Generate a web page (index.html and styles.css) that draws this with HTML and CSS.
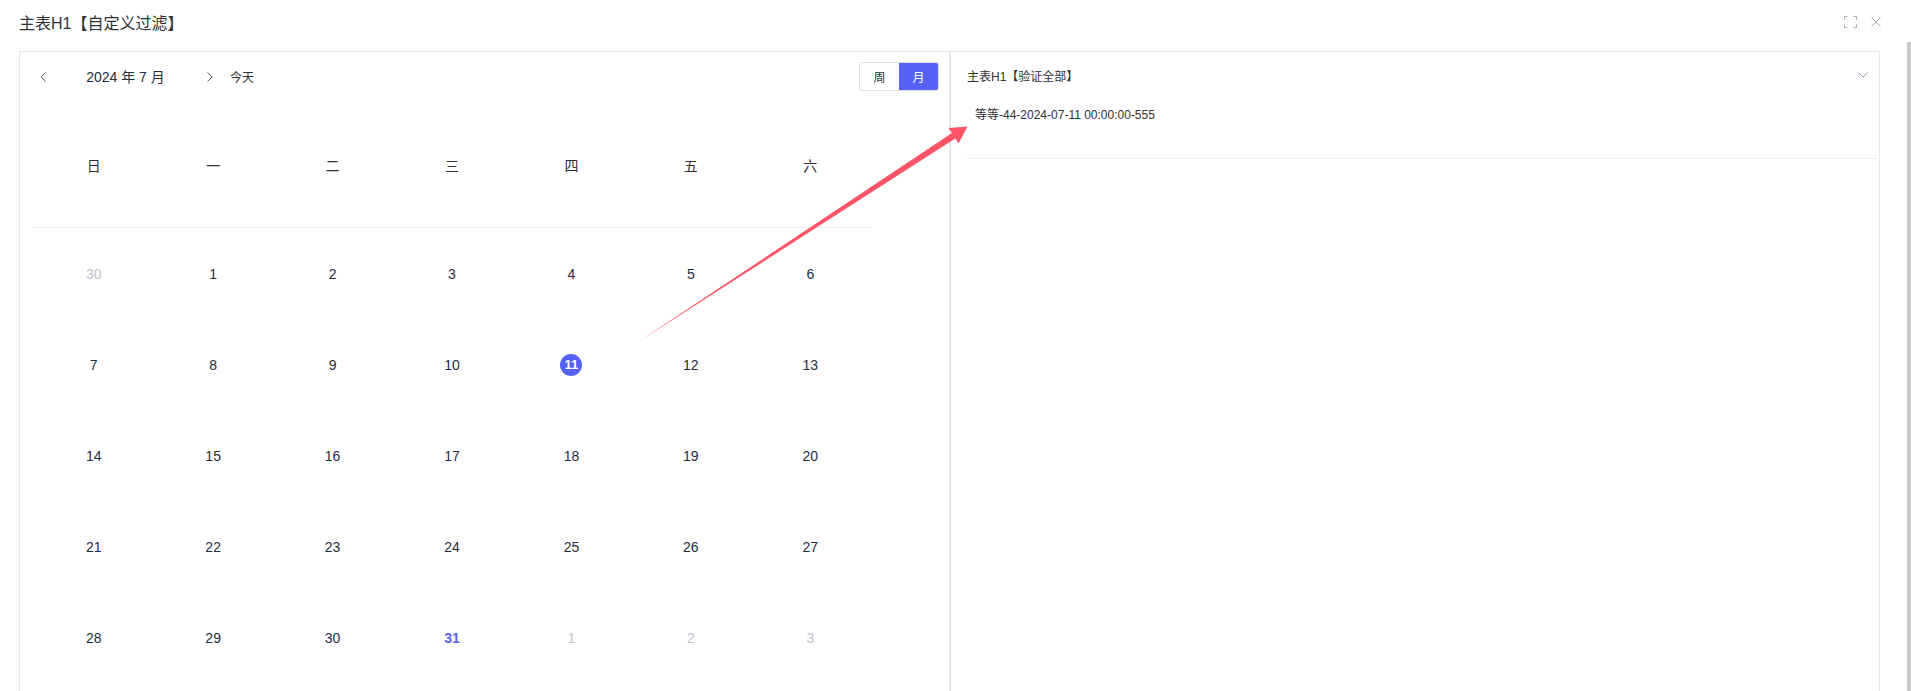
FILE: index.html
```html
<!doctype html>
<html>
<head>
    <meta charset="UTF-8">
    <title>主表H1【自定义过滤】</title>
    <link rel="stylesheet" href="styles.css">
</head>
<body>
<div class="dialog">
    <div class="dialog-header">
        <span class="dialog-title">主表H1【自定义过滤】</span>
        <div class="dialog-tools">
            <svg class="tool-icon" width="13" height="12" viewBox="0 0 13 12"><path d="M0.5 3.5V0.5H3.5M9.5 0.5H12.5V3.5M12.5 8.5V11.5H9.5M3.5 11.5H0.5V8.5" fill="none" stroke="#a8abb2" stroke-width="1"/></svg>
            <svg class="tool-icon" width="10" height="10" viewBox="0 0 10 10"><path d="M0.5 0.5L9.5 9.5M9.5 0.5L0.5 9.5" fill="none" stroke="#a8abb2" stroke-width="1"/></svg>
        </div>
    </div>

    <div class="dialog-body">
        <div class="board">
            <!-- 日历 -->
            <div class="cal">
                <div class="cal-toolbar">
                    <span class="nav-btn nav-prev"><svg width="6" height="10" viewBox="0 0 6 10"><path d="M5.5 0.5L1 5L5.5 9.5" fill="none" stroke="#606266" stroke-width="1"/></svg></span>
                    <span class="cal-title">2024 年 7 月</span>
                    <span class="nav-btn nav-next"><svg width="6" height="10" viewBox="0 0 6 10"><path d="M0.5 0.5L5 5L0.5 9.5" fill="none" stroke="#606266" stroke-width="1"/></svg></span>
                    <span class="today">今天</span>
                    <div class="view-switch">
                        <span class="view-btn">周</span>
                        <span class="view-btn active">月</span>
                    </div>
                </div>

                <div class="cal-grid">
                    <div class="week-head">
                        <span>日</span><span>一</span><span>二</span><span>三</span><span>四</span><span>五</span><span>六</span>
                    </div>
                    <div class="week">
                        <span class="day other">30</span><span class="day">1</span><span class="day">2</span><span class="day">3</span><span class="day">4</span><span class="day">5</span><span class="day">6</span>
                    </div>
                    <div class="week">
                        <span class="day">7</span><span class="day">8</span><span class="day">9</span><span class="day">10</span><span class="day"><b class="selected">11</b></span><span class="day">12</span><span class="day">13</span>
                    </div>
                    <div class="week">
                        <span class="day">14</span><span class="day">15</span><span class="day">16</span><span class="day">17</span><span class="day">18</span><span class="day">19</span><span class="day">20</span>
                    </div>
                    <div class="week">
                        <span class="day">21</span><span class="day">22</span><span class="day">23</span><span class="day">24</span><span class="day">25</span><span class="day">26</span><span class="day">27</span>
                    </div>
                    <div class="week">
                        <span class="day">28</span><span class="day">29</span><span class="day">30</span><span class="day today-day">31</span><span class="day other">1</span><span class="day other">2</span><span class="day other">3</span>
                    </div>
                </div>
            </div>

            <!-- 右侧列表 -->
            <div class="side">
                <div class="side-header">
                    <span class="side-title">主表H1【验证全部】</span>
                    <svg class="collapse-icon" width="10" height="6" viewBox="0 0 10 6"><path d="M0.5 0.5L5 5L9.5 0.5" fill="none" stroke="#8c95b4" stroke-width="1"/></svg>
                </div>
                <div class="events">
                    <div class="event">等等-44-2024-07-11 00:00:00-555</div>
                </div>
            </div>
        </div>
        <div class="scroll-thumb"></div>
    </div>
</div>

<svg class="mark-arrow" width="1911" height="691" viewBox="0 0 1911 691">
    <polygon points="638,342 952,133 948.5,128 967.5,126.5 958.5,143.5 955.3,138.5" fill="#fd5468"/>
</svg>
</body>
</html>
```

FILE: styles.css
```css
* { margin: 0; padding: 0; box-sizing: border-box; }
html, body { height: 100%; overflow: hidden; }
body {
    background: #fff;
    font-family: "Liberation Sans", "Noto Sans CJK SC", sans-serif;
    color: #303133;
    position: relative;
}

.dialog { height: 100%; display: flex; flex-direction: column; }
.dialog-header {
    height: 42px;
    padding: 2px 30px 0 19px;
    display: flex;
    align-items: center;
    justify-content: space-between;
}
.dialog-title { font-size: 16px; color: #303133; }
.dialog-tools { display: flex; align-items: center; gap: 14px; }
.tool-icon { display: block; }

.dialog-body { flex: 1; display: flex; min-height: 0; }
.board {
    flex: 1;
    margin: 9px 27px 0 19px;
    border: 1px solid #e4e7ed;
    border-bottom: 0;
    display: flex;
}
.scroll-thumb { width: 4px; background: #c8c8c8; }

/* calendar */
.cal { width: 931px; border-right: 2px solid #e4e7ed; }
.cal-toolbar {
    display: flex;
    align-items: center;
    height: 29px;
    margin: 10px 10px 0 13px;
    font-size: 14px;
}
.nav-btn { display: flex; align-items: center; justify-content: center; height: 29px; }
.nav-prev { width: 20px; }
.nav-next { width: 24px; }
.cal-title { width: 145px; text-align: center; color: #1f2d3d; margin-top: -1px; }
.today { margin-left: 8px; font-size: 12px; color: #303133; margin-top: -1px; }
.view-switch {
    margin-left: auto;
    display: flex;
    height: 29px;
    border: 1px solid #dcdfe6;
    border-radius: 3px;
    overflow: hidden;
}
.view-btn {
    width: 39px;
    display: flex;
    align-items: center;
    justify-content: center;
    font-size: 12px;
    color: #303133;
    background: #fff;
}
.view-btn.active { background: #5662f6; color: #fff; }

.cal-grid { width: 836px; margin: 15px 0 0 14px; padding-bottom: 20px; }
.week-head {
    display: grid;
    grid-template-columns: repeat(7, 1fr);
    height: 122px;
    padding-bottom: 4px;
    align-items: center;
    border-bottom: 1px solid #ebeef5;
    font-size: 14px;
    color: #303133;
    text-align: center;
}
.week {
    display: grid;
    grid-template-columns: repeat(7, 1fr);
    height: 91px;
    align-items: center;
    text-align: center;
}
.day { font-size: 14px; color: #1f2d3d; }
.day.other { color: #c0c4cc; }
.day.today-day { color: #5662f6; font-weight: bold; }
.selected {
    display: inline-block;
    width: 22px;
    height: 22px;
    line-height: 22px;
    border-radius: 50%;
    background: #5662f6;
    color: #fff;
    font-weight: bold;
    font-size: 13px;
}

/* side list */
.side { flex: 1; padding: 0 2px 0 16px; }
.side-header {
    height: 46px;
    display: flex;
    align-items: center;
    justify-content: space-between;
    font-size: 12px;
}
.side-title { color: #303133; }
.collapse-icon { margin-right: 9px; }
.events { height: 61px; border-bottom: 1px solid #ebeef5; }
.event { padding-left: 8px; line-height: 34px; font-size: 12px; color: #303133; }

.mark-arrow { position: absolute; left: 0; top: 0; pointer-events: none; }
```
